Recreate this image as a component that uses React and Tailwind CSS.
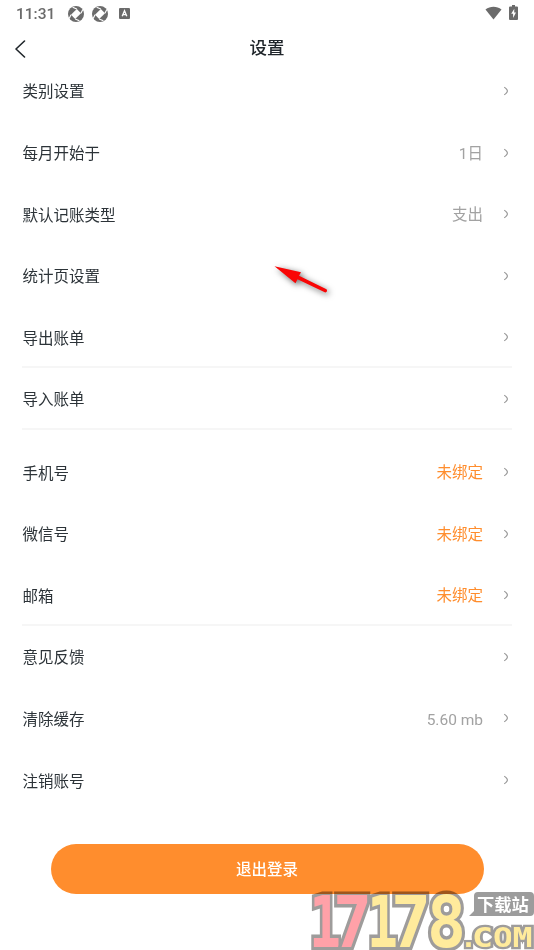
import clsx from 'clsx'

const groups = [
  {
    id: 'ledger',
    rows: [
      { label: '类别设置' },
      { label: '每月开始于', value: '1日' },
      { label: '默认记账类型', value: '支出' },
      { label: '统计页设置' },
      { label: '导出账单', divider: true },
      { label: '导入账单', divider: true },
    ],
  },
  {
    id: 'account',
    rows: [
      { label: '手机号', value: '未绑定', accent: true },
      { label: '微信号', value: '未绑定', accent: true },
      { label: '邮箱', value: '未绑定', accent: true, divider: true },
      { label: '意见反馈' },
      { label: '清除缓存', value: '5.60 mb' },
      { label: '注销账号' },
    ],
  },
]

// Each glyph of the logo is stretched to its own width
const logoDigits = [
  { char: '1', x: 309, width: 32, fill: '#ffa1a8' },
  { char: '7', x: 333, width: 39, fill: '#ffa1a8' },
  { char: '1', x: 367, width: 31, fill: '#ffeb9c' },
  { char: '7', x: 391, width: 40, fill: '#ffeb9c' },
  { char: '8', x: 427, width: 39, fill: '#ffeb9c' },
]

const logoLetters = [
  { char: '.', x: 460, width: 17 },
  { char: 'C', x: 472, width: 21 },
  { char: 'O', x: 493, width: 20 },
  { char: 'M', x: 512.5, width: 20 },
]

function SyncIcon() {
  return (
    <svg className="w-4 h-4" viewBox="0 0 16 16" fill="none">
      <circle cx="8" cy="8" r="8" fill="#6b6b6b" />
      <path d="M8.800 3L13 7.200L7.200 13L3 8.800z" fill="#fff" />
      <path d="M8.800 3L4.600 1.200M13 7.200L14.800 3.600M7.200 13L11.400 14.800M3 8.800L1.200 12.400" stroke="#fff" strokeWidth="1.100" />
    </svg>
  )
}

function StatusBar() {
  return (
    <div className="h-7 flex items-center justify-between pl-4 pr-4 text-[#6b6b6b]">
      <div className="flex items-center">
        <span className="w-[52px] font-[Roboto] text-[15.5px] leading-7 font-medium">11:31</span>
        <div className="flex items-center gap-2 -mt-px">
          <SyncIcon />
          <SyncIcon />
        </div>
        <svg className="ml-[11px] -mt-px w-[11px] h-[11px]" viewBox="0 0 12 12">
          <rect width="12" height="12" rx="1.2" fill="#6b6b6b" />
          <path d="M3.500 9L6 3l2.500 6M4.400 7.200h3.200" stroke="#fff" strokeWidth="1.500" fill="none" />
        </svg>
      </div>
      <div className="flex items-center gap-[7px] -mt-[3px]">
        <svg className="w-[17px] h-[14px]" viewBox="0 0 18 14">
          <path d="M0.500 3.200C5.500-0.600 12.500-0.600 17.500 3.200L9 13.800z" fill="#6b6b6b" />
        </svg>
        <svg className="w-[9px] h-[15px]" viewBox="0 0 9 15">
          <path d="M3 0h3v1.500h2a1 1 0 0 1 1 1V14a1 1 0 0 1-1 1H1a1 1 0 0 1-1-1V2.500a1 1 0 0 1 1-1h2z" fill="#6b6b6b" />
          <path d="M5.300 3.800L2.200 8.800h1.900v4.200L7 7.600H5.200z" fill="#fff" />
        </svg>
      </div>
    </div>
  )
}

function Header() {
  return (
    <div className="relative h-8 mt-1 flex items-center justify-center">
      <button className="absolute left-[14px] top-2">
        <svg className="w-3 h-[18px]" viewBox="0 0 12 18" fill="none">
          <path d="M10.500 1L2 9l8.500 8" stroke="#20262b" strokeWidth="1.6" strokeLinecap="round" strokeLinejoin="round" />
        </svg>
      </button>
      <h1 className="text-[17.5px] leading-8 font-medium text-[#20262b]">设置</h1>
    </div>
  )
}

function Row({ label, value, accent, divider }) {
  return (
    <div
      className={clsx(
        'h-[61.6px] flex items-center border-b-2',
        divider ? 'border-[#f6f6f6]' : 'border-transparent',
      )}
    >
      <span className="flex-1 pl-[0.6px] pt-[6.6px] text-[#2c3338]">{label}</span>
      {value && <span className={clsx('pt-[6px]', accent ? 'text-[#ff8d2d]' : 'text-[#a2a2a2]')}>{value}</span>}
      <svg className="ml-[20px] mr-[3px] mt-[2.500px] w-[6px] h-[10px]" viewBox="0 0 6 10" fill="none">
        <path d="M1.200 1.300C2.500 1.800 4.400 3.800 4.400 5C4.400 6.200 2.500 8.200 1.200 8.700" stroke="#999" strokeWidth="1.200" />
      </svg>
    </div>
  )
}

function Arrow() {
  return (
    <svg className="absolute left-[264px] top-[256px] w-[80px] h-[50px]" viewBox="264 256 80 50">
      <path
        d="M274.500 266.200L301 272.200L299 275.700L326.500 289.300Q328 291.700 325.300 292.500L297.500 279.300L295.500 283.200z"
        fill="#f90505"
        className="drop-shadow-[2px_2px_3px_rgba(0,0,0,0.6)]"
      />
    </svg>
  )
}

function Watermark() {
  return (
    <svg className="absolute left-[304px] top-[884px] w-[230px] h-[66px] overflow-visible mix-blend-multiply" viewBox="304 884 230 66">
      <g fontFamily="DejaVu Sans Mono" fontWeight="700" stroke="#9e9c9b" strokeLinejoin="miter" paintOrder="stroke">
        <g fontSize="72" strokeWidth="7">
          {logoDigits.map(({ char, x, width, fill }) => (
            <text key={x} x={x} y="947" fill={fill} textLength={width} lengthAdjust="spacingAndGlyphs">{char}</text>
          ))}
        </g>
        <g fontSize="27" strokeWidth="4.500" fill="#ffeb9c">
          {logoLetters.map(({ char, x, width }) => (
            <text key={x} x={x} y="947" textLength={width} lengthAdjust="spacingAndGlyphs">{char}</text>
          ))}
        </g>
      </g>
      <path d="M478 892H530Q534 892 534 896V912Q534 916 530 916H469L474 911V896Q474 892 478 892z" fill="#9c9c9c" />
      <text x="477" y="911" fontFamily="Noto Sans CJK SC" fontWeight="700" fontSize="17.3" fill="#fff">下载站</text>
    </svg>
  )
}

export default function App() {
  return (
    <div className="relative w-full h-[950px] overflow-hidden bg-white font-[Roboto,'Noto_Sans_CJK_SC',sans-serif] text-[15.500px]">
      <StatusBar />
      <Header />
      <main className="px-[22px] -mt-[4px]">
        {groups.map((group) => (
          <section key={group.id} className="mb-[11.500px]">
            {group.rows.map((row) => (
              <Row key={row.label} {...row} />
            ))}
          </section>
        ))}
      </main>
      <button className="mx-auto mt-[33px] pt-[3px] block w-[433px] h-[50px] rounded-full bg-[#ff8d2d] text-white font-medium">
        退出登录
      </button>
      <Arrow />
      <Watermark />
    </div>
  )
}
